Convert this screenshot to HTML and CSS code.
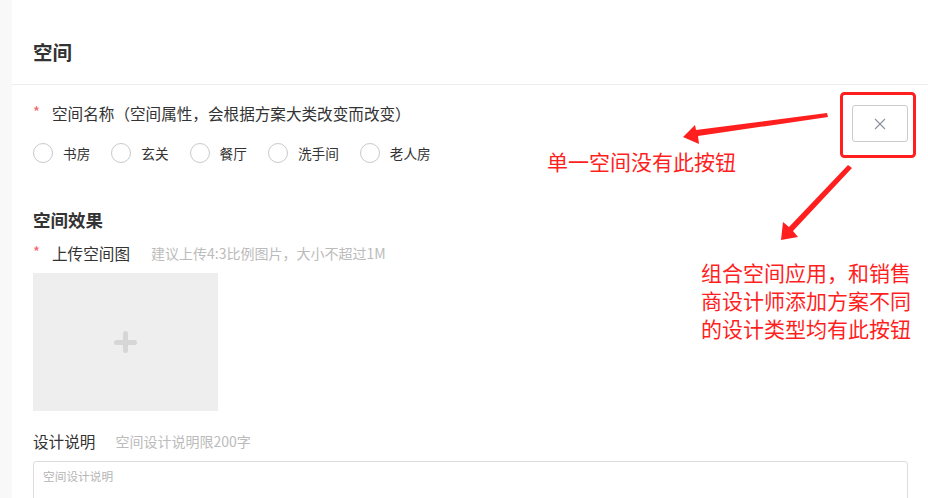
FILE: index.html
```html
<!DOCTYPE html>
<html lang="zh-CN">
<head>
<meta charset="utf-8">
<title>空间</title>
<link rel="stylesheet" href="styles.css">
</head>
<body>
<div class="page">
  <aside class="side"></aside>
  <main class="panel">
    <header class="panel-head"><h2 class="panel-title">空间</h2></header>
    <div class="panel-body">
      <section class="space-name">
        <div class="name-left">
          <div class="field-label"><span class="req">*</span>空间名称（空间属性，会根据方案大类改变而改变）</div>
          <div class="radios">
            <label class="radio"><span class="circle"></span>书房</label>
            <label class="radio"><span class="circle"></span>玄关</label>
            <label class="radio"><span class="circle"></span>餐厅</label>
            <label class="radio"><span class="circle"></span>洗手间</label>
            <label class="radio"><span class="circle"></span>老人房</label>
          </div>
        </div>
        <button class="del-btn" type="button" aria-label="删除">
          <svg width="12" height="12" viewBox="0 0 12 12"><path d="M1 1 L11 11 M11 1 L1 11" stroke="#8a8f99" stroke-width="1.1" fill="none"/></svg>
        </button>
      </section>

      <h3 class="sub-title">空间效果</h3>
      <div class="field-label upload-label"><span class="req">*</span>上传空间图<span class="hint">建议上传4:3比例图片，大小不超过1M</span></div>
      <div class="upload"><span class="plus"></span></div>

      <div class="field-label desc-label">设计说明<span class="hint">空间设计说明限200字</span></div>
      <textarea class="desc" placeholder="空间设计说明"></textarea>
    </div>
  </main>

  <div class="annot">
    <svg class="annot-svg" width="928" height="498" viewBox="0 0 928 498">
      <rect x="841.5" y="93.5" width="73" height="63" rx="3" fill="none" stroke="#ff1f1f" stroke-width="3"/>
      <polygon points="683,137 695,125 696,130 827,113 828,117 698,136 699,144" fill="#ff1f1f"/>
      <polygon points="781,240 783,222 789,227 848,165 852,168 793,231 798,237" fill="#ff1f1f"/>
    </svg>
    <span class="note note-1">单一空间没有此按钮</span>
    <span class="note note-2">组合空间应用，和销售<br>商设计师添加方案不同<br>的设计类型均有此按钮</span>
  </div>
</div>
</body>
</html>
```

FILE: styles.css
```css
* { box-sizing: border-box; }
html, body { margin: 0; padding: 0; }
body {
  font-family: "Noto Sans CJK SC", "Noto Sans", sans-serif;
  color: #333;
  background: #fff;
}
.page {
  position: relative;
  display: flex;
  width: 928px;
  height: 498px;
  overflow: hidden;
}
.side {
  width: 12px;
  flex: none;
  background: #f8f8f8;
}
.panel {
  flex: 1;
  background: #fff;
  display: flex;
  flex-direction: column;
}
.panel-head {
  flex: none;
  height: 85px;
  padding: 39px 0 0 21px;
  border-bottom: 1px solid #eeeeee;
}
.panel-title {
  margin: 0;
  font-size: 19.5px;
  line-height: 26px;
  font-weight: 700;
  color: #333;
}
.panel-body {
  flex: none;
  padding: 18px 20px 0 21px;
  display: flex;
  flex-direction: column;
  align-items: flex-start;
}
.space-name {
  align-self: stretch;
  display: flex;
  justify-content: space-between;
  align-items: flex-start;
}
.field-label {
  flex: none;
  display: flex;
  align-items: center;
  height: 20px;
  font-size: 15.6px;
  line-height: 20px;
  color: #333;
}
.req {
  width: 19px;
  color: #f5636b;
  font-size: 15px;
  position: relative;
  top: -1px;
}
.radios {
  display: flex;
  align-items: center;
  margin-top: 20px;
  height: 20px;
}
.radio {
  display: flex;
  align-items: center;
  font-size: 13.65px;
  line-height: 20px;
  color: #333;
  margin-right: 21px;
}
.circle {
  width: 20px;
  height: 20px;
  border: 1.5px solid #c9c9c9;
  border-radius: 50%;
  margin-right: 10px;
  background: #fff;
}
.del-btn {
  margin-top: 2px;
  width: 56px;
  height: 37px;
  border: 1px solid #cccccc;
  border-radius: 3px;
  background: #fff;
  display: flex;
  align-items: center;
  justify-content: center;
  padding: 0;
}
.sub-title {
  flex: none;
  margin: 45px 0 0;
  font-size: 17.5px;
  line-height: 24px;
  font-weight: 700;
  color: #333;
}
.upload-label { margin-top: 11px; }
.hint {
  margin-left: 21px;
  font-size: 14px;
  color: #bbbbbb;
}
.upload {
  flex: none;
  margin-top: 10px;
  width: 185px;
  height: 138px;
  background: #eeeeee;
  display: flex;
  align-items: center;
  justify-content: center;
}
.plus {
  position: relative;
  width: 23px;
  height: 22px;
}
.plus::before, .plus::after {
  content: "";
  position: absolute;
  background: #d6d6d6;
  border-radius: 3px;
}
.plus::before { left: 0; right: 0; top: 8.5px; height: 5px; }
.plus::after { top: 0; bottom: 0; left: 9px; width: 5px; }
.desc-label { margin-top: 20px; }
.desc-label .hint { margin-left: 20px; }
.desc {
  flex: none;
  margin-top: 10px;
  align-self: stretch;
  height: 80px;
  border: 1px solid #dddddd;
  border-radius: 3px;
  padding: 6px 9px;
  font-family: "Noto Sans CJK SC", sans-serif;
  font-size: 11.7px;
  line-height: 16px;
  resize: none;
  outline: none;
}
.desc::placeholder { color: #b5b5b5; }

.annot {
  position: absolute;
  left: 0;
  top: 0;
  width: 928px;
  height: 498px;
  pointer-events: none;
}
.annot-svg { position: absolute; left: 0; top: 0; }
.note {
  position: absolute;
  color: #ff1f1f;
  font-family: "Noto Sans CJK SC", sans-serif;
  font-size: 21px;
  white-space: nowrap;
}
.note-1 { left: 547px; top: 148px; line-height: 26px; }
.note-2 { left: 701px; top: 258px; line-height: 28px; }
```
